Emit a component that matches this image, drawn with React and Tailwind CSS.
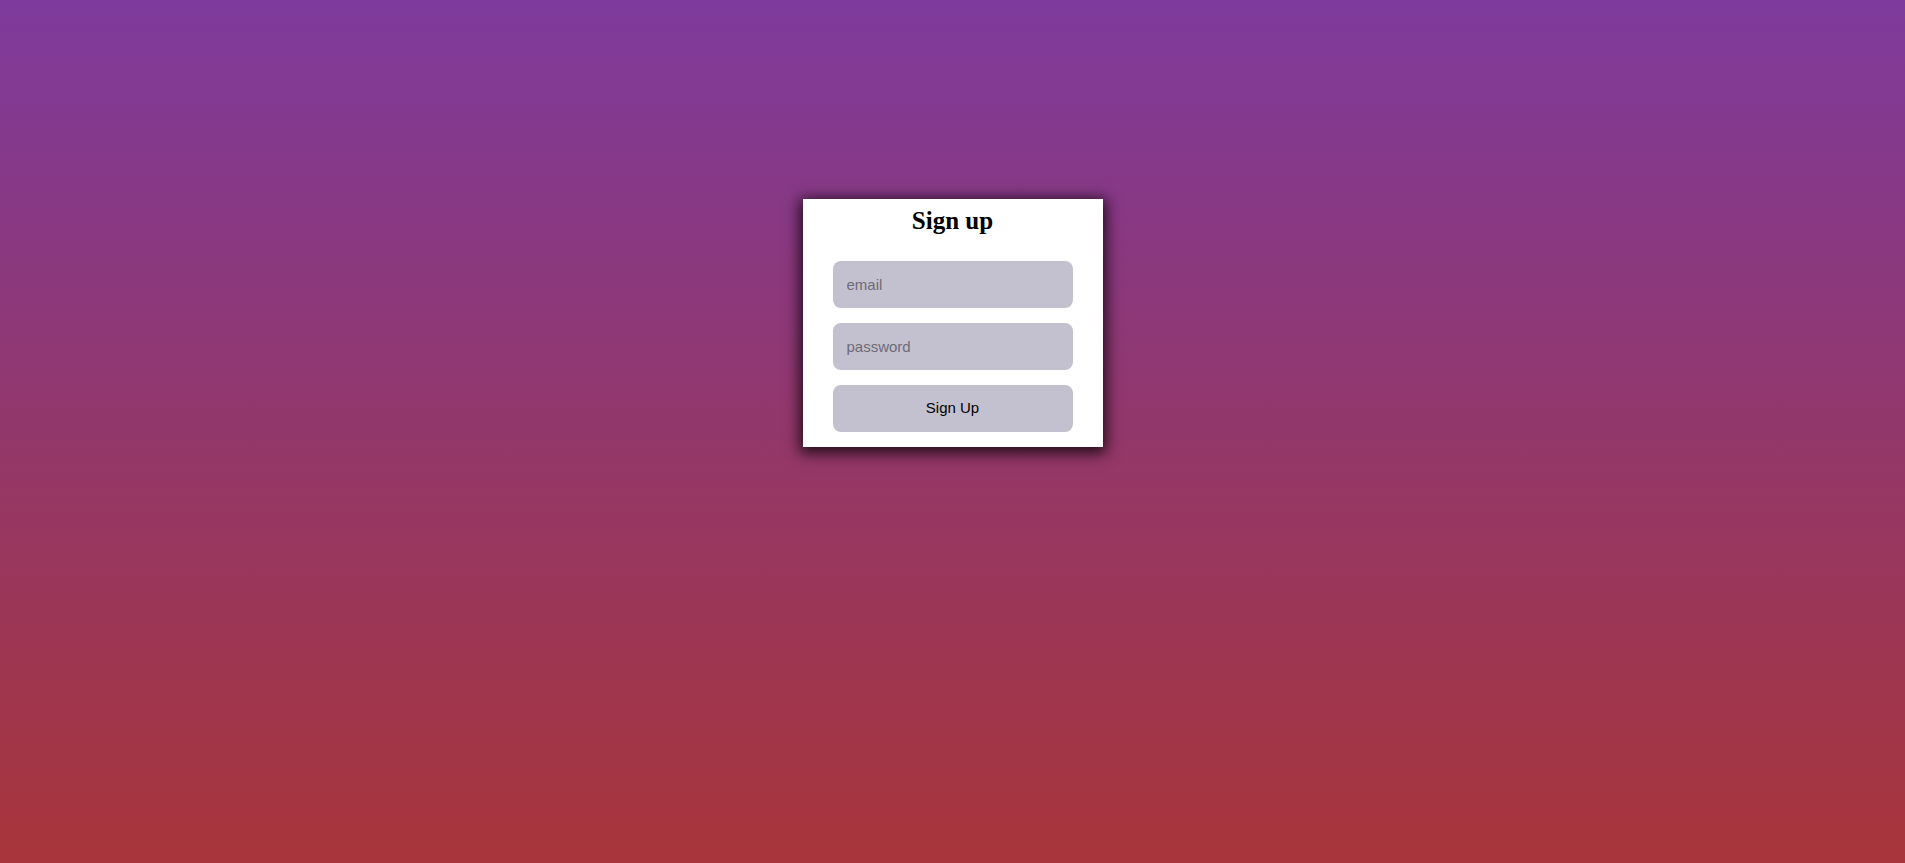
export default function App() {
  return (
    <div className="min-h-screen w-full flex justify-center items-start pt-[199px] bg-[linear-gradient(to_bottom,#7e3a9c,#a8353a)]">
      <div className="w-[300px] bg-white flex flex-col items-center pt-[7px] pb-[15px] shadow-[0_3px_14px_3px_rgba(0,0,0,0.8)]">
        <h1 className="font-['Liberation_Serif',serif] font-bold text-[25px] leading-[30px] text-black mb-[25px]">Sign up</h1>
        <div className="flex flex-col gap-[15px] w-[240px] font-['Liberation_Sans',Arial,sans-serif] text-[15px]">
          <input
            type="email"
            placeholder="email"
            className="h-[47px] rounded-lg bg-[#c3c1d0] px-[14px] text-black placeholder:text-[#6e6b76] outline-none"
          />
          <input
            type="password"
            placeholder="password"
            className="h-[47px] rounded-lg bg-[#c3c1d0] px-[14px] text-black placeholder:text-[#6e6b76] outline-none"
          />
          <button className="h-[47px] rounded-lg bg-[#c3c1d0] text-black">Sign Up</button>
        </div>
      </div>
    </div>
  );
}
